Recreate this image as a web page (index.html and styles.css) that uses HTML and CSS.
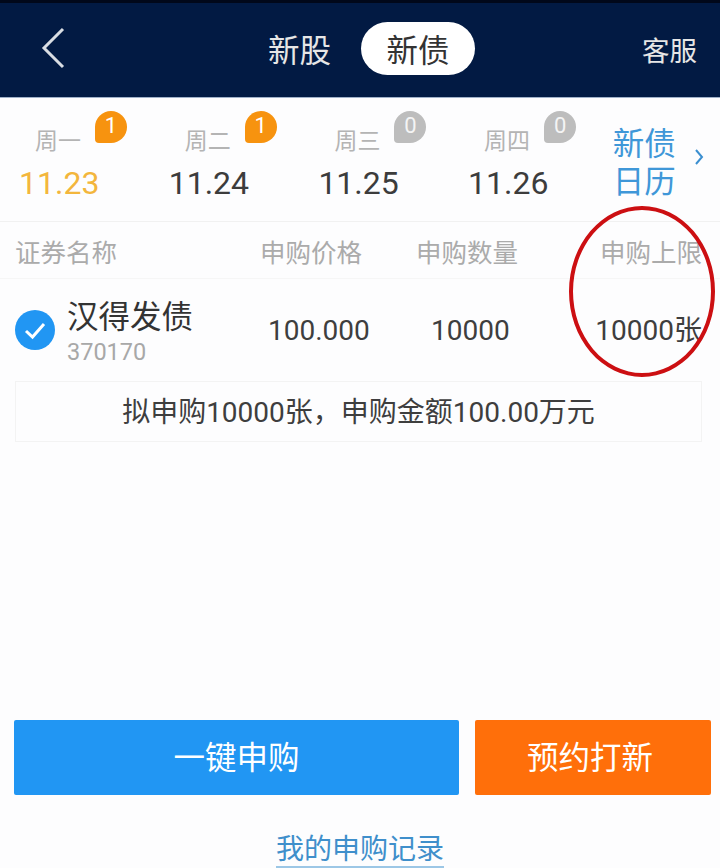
FILE: index.html
```html
<!DOCTYPE html>
<html lang="zh-CN">
<head>
<meta charset="utf-8">
<title>新债</title>
<link rel="stylesheet" href="styles.css">
</head>
<body>
<div class="page">
  <header class="topbar">
    <svg class="back" width="24" height="42" viewBox="0 0 24 42"><path d="M22 2 L3 21 L22 40" fill="none" stroke="#d9dde3" stroke-width="3"/></svg>
    <div class="tabs">
      <span class="tab">新股</span>
      <span class="tab active">新债</span>
    </div>
    <span class="service">客服</span>
  </header>

  <section class="week">
    <div class="day today"><div class="dayname"><span>周一</span><i class="badge on">1</i></div><div class="date">11.23</div></div>
    <div class="day"><div class="dayname"><span>周二</span><i class="badge on">1</i></div><div class="date">11.24</div></div>
    <div class="day"><div class="dayname"><span>周三</span><i class="badge">0</i></div><div class="date">11.25</div></div>
    <div class="day"><div class="dayname"><span>周四</span><i class="badge">0</i></div><div class="date">11.26</div></div>
    <div class="calendar"><span class="callabel">新债<br>日历</span>
      <svg width="10" height="18" viewBox="0 0 10 18"><path d="M2 2 L8 9 L2 16" fill="none" stroke="#3b8fd0" stroke-width="2"/></svg>
    </div>
  </section>

  <div class="thead">
    <span class="c-name">证券名称</span>
    <span class="c-price">申购价格</span>
    <span class="c-qty">申购数量</span>
    <span class="c-limit">申购上限</span>
  </div>

  <div class="row">
    <div class="c-name stock">
      <svg class="check" width="40" height="40" viewBox="0 0 40 40"><circle cx="20" cy="20" r="20" fill="#2196f3"/><path d="M11 21 L17.500 27 L29 14" fill="none" stroke="#fff" stroke-width="3"/></svg>
      <div class="stockinfo">
        <div class="stockname">汉得发债</div>
        <div class="stockcode">370170</div>
      </div>
    </div>
    <span class="c-price cell">100.000</span>
    <span class="c-qty cell">10000</span>
    <span class="c-limit cell">10000张</span>
  </div>

  <div class="summary">拟申购10000张，申购金额100.00万元</div>

  <div class="actions">
    <button class="btn primary">一键申购</button>
    <button class="btn reserve">预约打新</button>
  </div>
  <div class="records"><a class="recordlink">我的申购记录</a></div>

  <div class="circle"></div>
</div>
</body>
</html>
```
FILE: styles.css
```css
* { box-sizing: border-box; }
html, body { margin: 0; padding: 0; }
body {
  background: #fdfdfe;
  font-family: "Noto Sans CJK SC", "Roboto", sans-serif;
  color: #3a3a3a;
}
.page {
  position: relative;
  width: 720px;
  height: 868px;
  overflow: hidden;
  display: flex;
  flex-direction: column;
}
.topbar {
  height: 98px;
  background: #021a43;
  border-top: 3px solid #01081a;
  border-bottom: 1px solid #9fb0c8;
  display: flex;
  align-items: center;
  padding: 0 23px 0 41px;
}
.back { display: block; margin-top: -4px; }
.tabs {
  display: flex;
  align-items: center;
  gap: 30px;
  margin-left: 203px;
  margin-top: -2px;
}
.tab { color: #e6e6e6; font-size: 31.500px; line-height: 53px; }
.tab.active {
  background: #fff;
  color: #333;
  border-radius: 27px;
  width: 114px;
  text-align: center;
}
.service { color: #e6e6e6; font-size: 27.500px; margin-top: -2px; margin-left: auto; }

.week {
  height: 125px;
  display: flex;
  border-bottom: 1px solid #f1f1f1;
  padding-left: 19px;
}
.day { width: 149.700px; padding-top: 23px; }
.dayname {
  display: flex;
  align-items: flex-start;
  color: #b4b4b4;
  font-size: 23px;
  line-height: 36px;
  padding-left: 16px;
  height: 42px;
}
.badge {
  font-style: normal;
  font-family: "Roboto", sans-serif;
  width: 32px;
  height: 32px;
  margin: -10px 0 0 14px;
  border-radius: 50% 50% 50% 4px;
  background: #bdbdbd;
  color: #f4f4f4;
  font-size: 22px;
  line-height: 30px;
  text-align: center;
}
.badge.on { background: #f7930f; color: #fff; }
.date {
  font-family: "Roboto", sans-serif;
  font-size: 32px;
  line-height: 40px;
  color: #3c3c3c;
}
.today .date { color: #f3b63c; }
.calendar {
  display: flex;
  align-items: center;
  gap: 18px;
  margin-left: -5px;
  height: 100%;
}
.calendar svg { margin-top: -6px; }
.callabel {
  color: #3f97d8;
  font-size: 31.500px;
  line-height: 38px;
}

.thead, .row {
  display: grid;
  grid-template-columns: 245px 156px 184px 102px;
  padding-left: 15px;
  align-items: center;
}
.thead {
  height: 57px;
  color: #ababab;
  font-size: 25.500px;
  border-bottom: 1px solid #f6f6f6;
}
.c-limit { justify-self: end; white-space: nowrap; }
.row { height: 102px; }
.cell {
  font-family: "Roboto", "Noto Sans CJK SC", sans-serif;
  font-size: 28px;
  line-height: 36px;
  color: #3e3e3e;
  margin-top: 2px;
}
.row .c-price { margin-left: 8px; }
.row .c-qty { margin-left: 15px; }
.stock { display: flex; align-items: center; gap: 12px; }
.check { display: block; flex: none; }
.stockname { font-size: 31.500px; line-height: 44px; color: #333; margin-top: -1px; }
.stockcode {
  font-family: "Roboto", sans-serif;
  font-size: 23.500px;
  line-height: 30px;
  color: #a8a8a8;
  margin-top: 1px;
}
.summary {
  margin: 0 18px 0 15px;
  height: 61px;
  border: 1px solid #f3f3f3;
  text-align: center;
  font-size: 28px;
  line-height: 62px;
  color: #3e3e3e;
  font-family: "Roboto", "Noto Sans CJK SC", sans-serif;
}
.actions {
  margin-top: 278px;
  display: flex;
  gap: 16px;
  padding: 0 9px 0 14px;
}
.btn {
  height: 75px;
  border: 0;
  border-radius: 2px;
  color: #fff;
  font-family: inherit;
  font-size: 31.500px;
  line-height: 71px;
  padding: 0 0 4px;
}
.primary { width: 445px; background: #2196f3; }
.reserve { width: 236px; background: #ff6f0a; padding-right: 6px; }
.records { text-align: center; margin-top: 33px; }
.recordlink {
  display: inline-block;
  color: #3f8fcb;
  font-size: 28px;
  line-height: 38px;
  border-bottom: 2px solid #9cc7e6;
}
.circle {
  position: absolute;
  left: 569px;
  top: 206px;
  width: 146px;
  height: 171px;
  border: 4px solid #cc0f12;
  border-radius: 50%;
}
```
